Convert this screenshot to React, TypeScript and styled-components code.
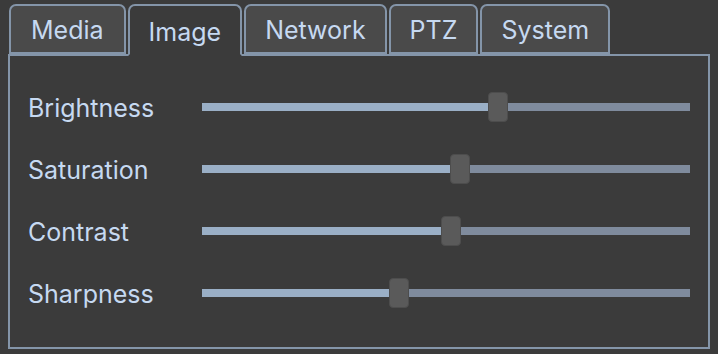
import React from "react";
import styled, { createGlobalStyle } from "styled-components";

const GlobalStyle = createGlobalStyle`
    html, body {
        margin: 0;
        padding: 0;
        background: #3b3b3b;
    }
    body {
        font-family: Inter, "Noto Sans", "Liberation Sans", sans-serif;
    }
`;

const Page = styled.div`
    width: 718px;
    height: 354px;
    box-sizing: border-box;
    padding: 4px 8px 0 8px;
    display: flex;
    flex-direction: column;
`;

const TabBar = styled.div`
    display: flex;
    align-items: flex-end;
    gap: 2px;
    padding-left: 1px;
    position: relative;
    z-index: 1;
`;

const Tab = styled.div<{ $active?: boolean; $pad: number }>`
    box-sizing: border-box;
    height: ${(p) => (p.$active ? "52px" : "50px")};
    margin-bottom: ${(p) => (p.$active ? "-2px" : "0")};
    padding: ${(p) => (p.$active ? "3px" : "2px")} ${(p) => p.$pad}px 0;
    display: flex;
    align-items: center;
    justify-content: center;
    border: 2px solid #8495a9;
    border-bottom-color: ${(p) => (p.$active ? "#3b3b3b" : "#8495a9")};
    border-radius: 7px 7px 0 0;
    background: ${(p) => (p.$active ? "#3b3b3b" : "#4a4a4a")};
    color: #c6d9f1;
    font-size: 25px;
`;

const Panel = styled.div`
    box-sizing: border-box;
    width: 702px;
    height: 295px;
    border: 2px solid #8495a9;
    padding: 20px 18px 0 18px;
    display: flex;
    flex-direction: column;
`;

const Row = styled.div`
    height: 62px;
    display: grid;
    grid-template-columns: 174px 1fr;
    align-items: center;
`;

const Label = styled.div`
    color: #c6d9f1;
    font-size: 25px;
    line-height: 1;
    padding-top: 3px;
`;

const Track = styled.div`
    position: relative;
    height: 8px;
    background: #7f8b9d;
`;

const Fill = styled.div`
    height: 100%;
    background: #9aafc6;
`;

const Thumb = styled.div`
    position: absolute;
    top: -11px;
    width: 20px;
    height: 30px;
    box-sizing: border-box;
    background: #5a5a5a;
    border: 1px solid #4d4d4d;
    border-radius: 4px;
`;

function Slider({ value, max }: { value: number; max: number }) {
    const f = value / max;
    return (
        <Track>
            <Fill style={{ width: `calc(${f} * (100% - 20px) + 10px)` }} />
            <Thumb style={{ left: `calc(${f} * (100% - 20px))` }} />
        </Track>
    );
}

const tabs = [
    { name: "Media", pad: 20 },
    { name: "Image", pad: 19 },
    { name: "Network", pad: 19 },
    { name: "PTZ", pad: 19 },
    { name: "System", pad: 19 },
];

const settings = [
    { name: "Brightness", value: 156 },
    { name: "Saturation", value: 135 },
    { name: "Contrast", value: 130 },
    { name: "Sharpness", value: 102 },
];

export default function App(): JSX.Element {
    return (
        <>
            <GlobalStyle />
            <Page>
                <TabBar>
                    {tabs.map((t) => (
                        <Tab key={t.name} $active={t.name === "Image"} $pad={t.pad}>
                            {t.name}
                        </Tab>
                    ))}
                </TabBar>
                <Panel>
                    {settings.map((s) => (
                        <Row key={s.name}>
                            <Label>{s.name}</Label>
                            <Slider value={s.value} max={255} />
                        </Row>
                    ))}
                </Panel>
            </Page>
        </>
    );
}
